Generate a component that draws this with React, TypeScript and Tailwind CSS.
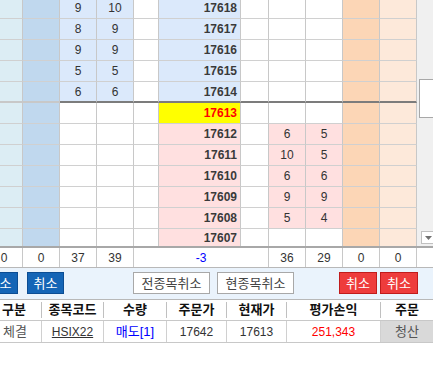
import React from "react";

type RowT = {
  p: number;
  t: "buy" | "cur" | "sell";
  a?: string;
  b?: string;
  c?: string;
  d?: string;
};

const rows: RowT[] = [
  { p: 17618, t: "buy", a: "9", b: "10" },
  { p: 17617, t: "buy", a: "8", b: "9" },
  { p: 17616, t: "buy", a: "9", b: "9" },
  { p: 17615, t: "buy", a: "5", b: "5" },
  { p: 17614, t: "buy", a: "6", b: "6" },
  { p: 17613, t: "cur" },
  { p: 17612, t: "sell", c: "6", d: "5" },
  { p: 17611, t: "sell", c: "10", d: "5" },
  { p: 17610, t: "sell", c: "6", d: "6" },
  { p: 17609, t: "sell", c: "9", d: "9" },
  { p: 17608, t: "sell", c: "5", d: "4" },
  { p: 17607, t: "sell" },
];

function GridRow({ r, idx }: { r: RowT; idx: number }) {
  const isMid = idx === 4;
  const isLast = idx === rows.length - 1;
  const h = isLast ? "h-[17px]" : idx === 0 ? "h-[21px]" : "h-[21px]";
  const bLight = isLast
    ? ""
    : isMid
    ? "border-b-2 border-b-[#c8c8c8]"
    : "border-b border-b-[#d0d0d0]";
  const bDark = isLast
    ? ""
    : isMid
    ? "border-b-2 border-b-[#7c7c7c]"
    : "border-b border-b-[#d0d0d0]";
  const buy = r.t === "buy";
  const sell = r.t === "sell";
  const cur = r.t === "cur";
  const pinkQty = sell && r.c !== undefined;
  const cell = "flex items-center justify-center border-r border-r-[#c8c8c8] shrink-0";
  return (
    <div className={`flex ${h}`}>
      <div className={`${cell} w-[37px] -ml-[14px] bg-[#dcedf4] ${bLight}`} />
      <div className={`${cell} w-[37px] bg-[#c0d8ee] ${bLight}`} />
      <div className={`${cell} w-[37px] ${buy ? "bg-[#dbe9fb]" : "bg-white"} ${bDark}`}>{r.a}</div>
      <div className={`${cell} w-[37px] ${buy ? "bg-[#dbe9fb]" : "bg-white"} ${bDark}`}>{r.b}</div>
      <div className={`${cell} w-[25px] bg-white ${bDark}`} />
      <div
        className={`${cell} !justify-end pr-[3px] w-[82px] font-bold text-[12px] ${
          buy ? "bg-[#dbe9fb] text-[#3a3a3a]" : cur ? "bg-[#ffff00] text-[#ff0000]" : "bg-[#ffe0e0] text-[#3a3a3a]"
        } ${bDark}`}
      >
        {r.p}
      </div>
      <div className={`${cell} w-[28px] bg-white ${bDark}`} />
      <div className={`${cell} w-[37px] ${pinkQty ? "bg-[#ffe0e0]" : "bg-white"} ${bDark}`}>{r.c}</div>
      <div className={`${cell} w-[37px] ${pinkQty ? "bg-[#ffe0e0]" : "bg-white"} ${bDark}`}>{r.d}</div>
      <div className={`${cell} w-[37px] bg-[#fcd6b6] ${bDark}`} />
      <div className={`${cell} w-[37px] bg-[#fde9da] ${bDark}`} />
    </div>
  );
}

export default function App() {
  const sc = "flex items-center justify-center border-r border-r-[#c8c8c8] shrink-0 h-full";
  return (
    <div
      className="relative w-[433px] h-[390px] overflow-hidden bg-white text-[12px] text-[#333]"
      style={{ fontFamily: '"Liberation Sans", "Noto Sans CJK KR", sans-serif' }}
    >
      {/* grid */}
      <div className="flex h-[248px] border-b-2 border-b-[#a8a8a8]">
        <div className="w-[417px] shrink-0 overflow-hidden">
          <div className="-mt-[2px]">
            {rows.map((r, i) => (
              <GridRow key={r.p} r={r} idx={i} />
            ))}
          </div>
        </div>
        <div className="relative w-[16px] shrink-0 bg-[#f0f0f0]">
          <div className="absolute left-[2px] top-[79px] w-[20px] h-[39px] bg-white border border-[#a8a8a8]" />
          <div className="absolute left-[4px] top-[231px] w-[14px] h-[13px] bg-white border border-[#c0c0c0] flex items-center justify-center">
            <svg width="7" height="4" viewBox="0 0 7 4">
              <polygon points="0,0 7,0 3.5,4" fill="#707070" />
            </svg>
          </div>
        </div>
      </div>

      {/* summary row */}
      <div className="flex h-[20px] border-b border-b-[#b8b8b8]">
        <div className={`${sc} w-[37px] -ml-[14px]`}>0</div>
        <div className={`${sc} w-[37px]`}>0</div>
        <div className={`${sc} w-[37px]`}>37</div>
        <div className={`${sc} w-[37px]`}>39</div>
        <div className={`${sc} w-[135px] text-[#0000ff]`}>-3</div>
        <div className={`${sc} w-[37px]`}>36</div>
        <div className={`${sc} w-[37px]`}>29</div>
        <div className={`${sc} w-[37px]`}>0</div>
        <div className={`${sc} w-[37px]`}>0</div>
        <div className="w-[16px] h-full" />
      </div>

      {/* toolbar */}
      <div className="flex items-start h-[32px] pt-[4px] bg-[#eaf3fc] border-b border-b-[#b8b8b8] text-[13px]">
        <button className="-ml-[19px] w-[37px] h-[22px] shrink-0 bg-[#1565b6] border border-[#0c4d93] text-white flex items-center justify-center leading-none">
          취소
        </button>
        <button className="ml-[9px] w-[37px] h-[22px] shrink-0 bg-[#1565b6] border border-[#0c4d93] text-white flex items-center justify-center leading-none">
          취소
        </button>
        <button className="ml-[69px] w-[77px] h-[22px] shrink-0 bg-white border border-[#a8a8a8] text-[#444] flex items-center justify-center leading-none">
          전종목취소
        </button>
        <button className="ml-[7px] w-[77px] h-[22px] shrink-0 bg-white border border-[#a8a8a8] text-[#444] flex items-center justify-center leading-none">
          현종목취소
        </button>
        <button className="ml-[45px] w-[38px] h-[22px] shrink-0 bg-[#ee3c3c] border border-[#c01c1c] text-white flex items-center justify-center leading-none">
          취소
        </button>
        <button className="ml-[3px] w-[38px] h-[22px] shrink-0 bg-[#ee3c3c] border border-[#c01c1c] text-white flex items-center justify-center leading-none">
          취소
        </button>
      </div>

      {/* order table header */}
      <div className="flex h-[21px] border-b border-b-[#c8c8c8] font-bold text-[13px] text-[#111]">
        <div className="w-[42px] shrink-0 flex items-center pl-[2px] border-r border-r-[#c0c0c0] my-[2px]">구분</div>
        <div className="w-[62px] shrink-0 flex items-center justify-center border-r border-r-[#c0c0c0] my-[2px]">종목코드</div>
        <div className="w-[63px] shrink-0 flex items-center justify-center border-r border-r-[#c0c0c0] my-[2px]">수량</div>
        <div className="w-[60px] shrink-0 flex items-center justify-center border-r border-r-[#c0c0c0] my-[2px]">주문가</div>
        <div className="w-[60px] shrink-0 flex items-center justify-center border-r border-r-[#c0c0c0] my-[2px]">현재가</div>
        <div className="w-[94px] shrink-0 flex items-center justify-center border-r border-r-[#c0c0c0] my-[2px]">평가손익</div>
        <div className="w-[52px] shrink-0 flex items-center justify-center my-[2px]">주문</div>
      </div>

      {/* order table row */}
      <div className="flex h-[22px] border-b border-b-[#c8c8c8] text-[13px]">
        <div className="w-[42px] shrink-0 flex items-center pl-[3px] border-r border-r-[#d0d0d0] text-[#555]">체결</div>
        <div className="w-[62px] shrink-0 flex items-center justify-center border-r border-r-[#d0d0d0] text-[#333] underline text-[12px]">HSIX22</div>
        <div className="w-[63px] shrink-0 flex items-center justify-center border-r border-r-[#d0d0d0] text-[#0000ff]">매도[1]</div>
        <div className="w-[60px] shrink-0 flex items-center justify-center border-r border-r-[#d0d0d0] text-[#333] text-[12px]">17642</div>
        <div className="w-[60px] shrink-0 flex items-center justify-center border-r border-r-[#d0d0d0] text-[#333] text-[12px]">17613</div>
        <div className="w-[94px] shrink-0 flex items-center justify-center border-r border-r-[#d0d0d0] text-[#ff0000] text-[12px]">251,343</div>
        <div className="w-[52px] shrink-0 flex items-center justify-center bg-[#d9d9d9] text-[#555]">청산</div>
      </div>
    </div>
  );
}
